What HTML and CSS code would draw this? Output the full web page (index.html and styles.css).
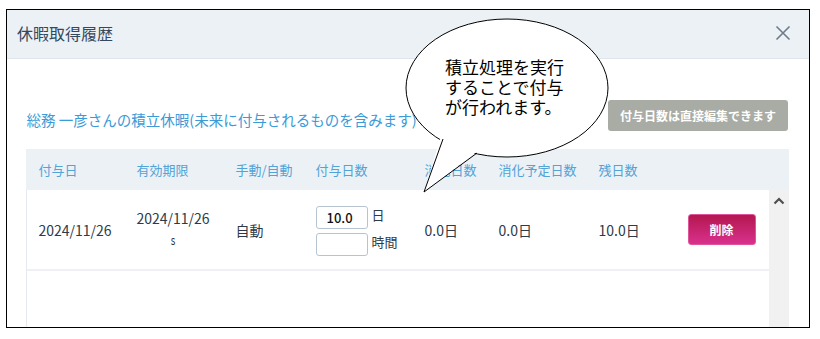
FILE: index.html
```html
<!DOCTYPE html>
<html lang="ja">
<head>
    <meta charset="UTF-8">
    <title>休暇取得履歴</title>
    <link rel="stylesheet" href="styles.css">
</head>
<body>
    <div class="modal">
        <div class="modal-header">
            <h1 class="modal-title">休暇取得履歴</h1>
            <svg class="close-icon" width="16" height="16" viewBox="0 0 16 16">
                <path d="M1.5 1.5 L14.5 14.5 M14.5 1.5 L1.5 14.5" stroke="#6d7b89" stroke-width="1.6" fill="none"/>
            </svg>
        </div>

        <div class="modal-body">
            <div class="summary">
                <p class="summary-text">総務 一彦さんの積立休暇(未来に付与されるものを含みます)</p>
                <button type="button" class="note-btn">付与日数は直接編集できます</button>
            </div>

            <div class="history-table">
                <div class="thead cols">
                    <div>付与日</div>
                    <div>有効期限</div>
                    <div>手動/自動</div>
                    <div>付与日数</div>
                    <div>消化日数</div>
                    <div>消化予定日数</div>
                    <div>残日数</div>
                    <div></div>
                </div>
                <div class="tbody">
                    <div class="rows">
                        <div class="row cols">
                            <div>2024/11/26</div>
                            <div><span class="period">2024/11/26<br><span class="tilde">s</span></span></div>
                            <div>自動</div>
                            <div class="grant-cell">
                                <input type="text" class="day-input" value="10.0">
                                <span class="unit">日</span>
                                <input type="text" class="day-input" value="">
                                <span class="unit">時間</span>
                            </div>
                            <div>0.0日</div>
                            <div>0.0日</div>
                            <div>10.0日</div>
                            <div><button type="button" class="delete-btn">削除</button></div>
                        </div>
                    </div>
                    <div class="scrollbar">
                        <svg width="12" height="8" viewBox="0 0 12 8">
                            <path d="M1.5 6.5 L6 2 L10.5 6.5" stroke="#4f4f4f" stroke-width="2.2" fill="none"/>
                        </svg>
                    </div>
                </div>
            </div>
        </div>
    </div>

    <!-- callout over the dialog -->
    <div class="callout">
        <svg width="220" height="190" viewBox="400 10 220 190">
            <ellipse cx="507" cy="88" rx="101" ry="69" fill="#fff" stroke="#000" stroke-width="1"/>
            <polygon points="441,136 424,192 479,150" fill="#fff"/>
            <polyline points="443,139 424,192 477,153" fill="none" stroke="#000" stroke-width="1"/>
        </svg>
        <div class="callout-text">
            <div>積立処理を実行</div>
            <div>することで付与</div>
            <div>が行われます。</div>
        </div>
    </div>
</body>
</html>
```

FILE: styles.css
```css
* { margin: 0; padding: 0; box-sizing: border-box; }
body {
    font-family: "Noto Sans CJK JP", "Noto Sans", sans-serif;
    background-color: #ffffff;
    position: relative;
    width: 820px;
    height: 339px;
    overflow: hidden;
    color: #2e3a46;
}
.modal {
    margin: 9px 0 0 6px;
    width: 804px;
    height: 319px;
    border: 1.5px solid #000;
    display: flex;
    flex-direction: column;
    overflow: hidden;
}
.modal-header {
    height: 49px;
    background-color: #ecf1f6;
    border-bottom: 1px solid #dfe5eb;
    display: flex;
    align-items: center;
    justify-content: space-between;
    padding: 0 18px 0 10px;
    flex-shrink: 0;
}
.modal-title {
    font-size: 16px;
    font-weight: normal;
    color: #34495e;
    line-height: 1;
    margin-top: -3px;
}
.close-icon { margin-top: -2px; }
.modal-body {
    flex: 1;
    display: flex;
    flex-direction: column;
    padding: 0 20px 0 18.5px;
}
.summary {
    margin-top: 41px;
    height: 31px;
    display: flex;
    align-items: center;
    justify-content: space-between;
}
.summary-text {
    font-size: 14.5px;
    color: #3b9ad8;
    padding-left: 1px;
    margin-top: 7px;
}
.note-btn {
    width: 180px;
    height: 31px;
    margin-right: 1px;
    background-color: #a9aca5;
    color: #fff;
    font-family: inherit;
    font-size: 12px;
    font-weight: bold;
    border: none;
    border-radius: 3px;
}
.history-table {
    margin-top: 18px;
    flex: 1;
    display: flex;
    flex-direction: column;
}
.cols {
    display: grid;
    grid-template-columns: 98px 99px 80px 109px 74px 100px 89px 1fr;
    align-items: center;
}
.thead {
    height: 41px;
    background-color: #ecf1f6;
    padding-left: 13px;
    font-size: 13px;
    color: #52a3d6;
}
.tbody {
    flex: 1;
    display: flex;
    border-left: 1px solid #e6e9ed;
}
.rows { flex: 1; }
.row {
    height: 81px;
    padding-left: 12px;
    border-bottom: 2px solid #eef0f3;
    font-size: 14px;
}
.period {
    display: inline-block;
    text-align: center;
    line-height: 21px;
    margin-top: -1px;
}
.tilde {
    font-size: 13px;
    display: inline-block;
    transform: scaleX(0.75);
}
.grant-cell {
    display: grid;
    grid-template-columns: 52px auto;
    column-gap: 4px;
    row-gap: 4px;
    align-items: start;
    margin-top: 3px;
}
.day-input {
    width: 52px;
    height: 23px;
    border: 1px solid #b6c4d1;
    border-radius: 3px;
    padding: 0 10px;
    font-family: inherit;
    font-size: 13px;
    font-weight: 500;
    color: #111;
}
.unit {
    font-size: 13px;
    line-height: 18px;
}
.delete-btn {
    width: 68px;
    height: 31px;
    border: 1px solid #e0559a;
    border-radius: 3px;
    background: linear-gradient(#b3174f, #d9318d);
    color: #fff;
    font-family: inherit;
    font-size: 12px;
    font-weight: bold;
}
.scrollbar {
    width: 20px;
    background-color: #f1f1f1;
    display: flex;
    justify-content: center;
    padding-top: 7px;
}
.scrollbar svg { display: block; }
.callout {
    position: absolute;
    left: 400px;
    top: 10px;
    width: 220px;
    height: 190px;
}
.callout svg {
    position: absolute;
    left: 0;
    top: 0;
}
.callout-text {
    position: absolute;
    left: 45px;
    top: 47px;
    font-size: 17px;
    line-height: 20px;
    color: #000;
    white-space: nowrap;
}
.callout-text div { height: 20px; }
```
